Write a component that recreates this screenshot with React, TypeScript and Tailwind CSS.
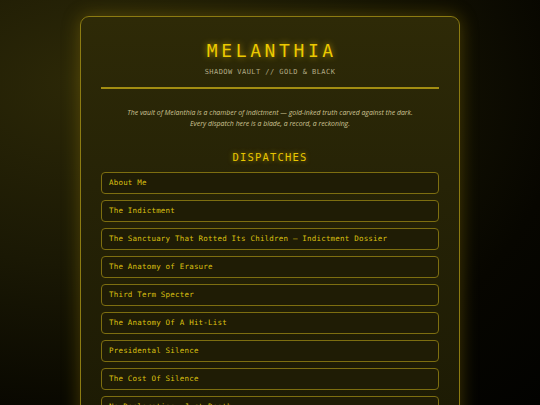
const dispatches = [
  'About Me',
  'The Indictment',
  'The Sanctuary That Rotted Its Children — Indictment Dossier',
  'The Anatomy of Erasure',
  'Third Term Specter',
  'The Anatomy Of A Hit-List',
  'Presidental Silence',
  'The Cost Of Silence',
  'No Declaration, Just Death',
];

export default function App() {
  return (
    <div className="h-[405px] w-[540px] overflow-hidden bg-[radial-gradient(ellipse_at_15%_20%,#2c2807_0%,#1a1804_40%,#070600_75%,#020200_100%)] pt-4 font-['DejaVu_Sans_Mono',monospace]">
      <div className="mx-auto w-[380px] h-[420px] rounded-[9px] border border-[#8c7b12] bg-[linear-gradient(180deg,#2e2a07_0%,#262306_40%,#1c1a04_100%)] px-5 shadow-[0_0_18px_rgba(180,150,10,0.35)]">
        {/* Header */}
        <div className="flex flex-col items-center pt-[22px]">
          <h1 className="text-[18px] leading-[24px] tracking-[3.6px] pl-[3.6px] text-[#ecc900] [text-shadow:0_0_6px_rgba(240,200,0,0.7)]">
            MELANTHIA
          </h1>
          <p className="mt-[4px] text-[7px] leading-[10px] tracking-[0.45px] text-[#b3ab85]">
            SHADOW VAULT // GOLD &amp; BLACK
          </p>
        </div>
        <div className="mt-[10px] h-[2px] bg-[#a38e12]" />

        {/* Intro */}
        <div className="mt-[18px] text-center font-['Open_Sans',sans-serif] italic text-[6.9px] leading-[11px] text-[#cdc394]">
          <p>The vault of Melanthia is a chamber of indictment — gold-inked truth carved against the dark.</p>
          <p>Every dispatch here is a blade, a record, a reckoning.</p>
        </div>

        {/* Dispatches */}
        <h2 className="mt-[21px] text-center text-[10.5px] leading-[14px] tracking-[1.2px] text-[#e8c600] [text-shadow:0_0_5px_rgba(240,200,0,0.6)]">
          DISPATCHES
        </h2>
        <ul className="mt-[8px] flex flex-col gap-[6px]">
          {dispatches.map((d) => (
            <li
              key={d}
              className="flex h-[22px] items-center rounded-[4px] border border-[#7d6e10] bg-[#1f1c05] px-[7px] text-[7.5px] tracking-[0.2px] text-[#dcc010]"
            >
              {d}
            </li>
          ))}
        </ul>
      </div>
    </div>
  );
}
